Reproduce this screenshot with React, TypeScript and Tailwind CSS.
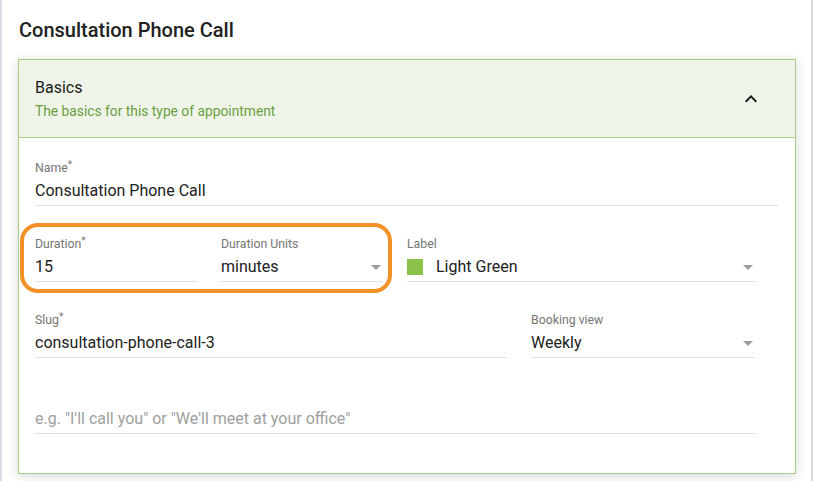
import React from 'react';

const Arrow: React.FC = () => (
    <svg width="10" height="5" viewBox="0 0 10 5" className="shrink-0">
        <path d="M0 0h10L5 5z" fill="#9e9e9e" />
    </svg>
);

interface FieldProps {
    label?: string;
    required?: boolean;
    value: string;
    placeholder?: boolean;
    select?: boolean;
    swatch?: string;
    width: string;
}

const Field: React.FC<FieldProps> = ({ label, required, value, placeholder, select, swatch, width }) => (
    <div className={`flex flex-col ${width}`}>
        <div className="h-4 text-[12.3px] leading-4 text-[#757575]">
            {label}
            {required && <span className="relative -top-[4px] text-[10px]">*</span>}
        </div>
        <div className="mt-[3px] flex h-6 items-center border-b border-[#e0e0e0] pb-[2px] box-content pr-[2px]">
            {swatch && <span className={`mr-[13px] h-4 w-4 shrink-0 ${swatch}`} />}
            <span
                className={`flex-1 text-[16px] leading-6 ${placeholder ? 'text-[#a0a0a0]' : 'text-[#212121]'}`}
            >
                {value}
            </span>
            {select && <Arrow />}
        </div>
    </div>
);

export default function App() {
    return (
        <div
            className="h-[481px] w-[813px] overflow-hidden border-x-2 border-[#d8dce0] bg-white"
            style={{ fontFamily: 'Roboto, "Liberation Sans", sans-serif' }}
        >
            <h1 className="pl-[17px] pt-[16px] text-[20px] font-medium leading-7 text-[#212121]">
                Consultation Phone Call
            </h1>

            <div className="ml-[16px] mt-[15px] w-[778px] border border-[#a8cd84] bg-white shadow-[0_2px_10px_rgba(0,0,0,0.16)]">
                <div className="flex items-center justify-between border-b border-[#a8cd84] bg-[#eef4e7] py-4 pl-4 pr-[32px]">
                    <div>
                        <div className="text-[16px] leading-6 text-[#1a1a1a]">Basics</div>
                        <div className="mt-px text-[13.8px] leading-5 text-[#6c9f45]">
                            The basics for this type of appointment
                        </div>
                    </div>
                    <svg width="24" height="24" viewBox="0 0 24 24" className="mt-[1px]">
                        <path d="M12 8l-6 6 1.41 1.41L12 10.83l4.59 4.58L18 14z" fill="#1a1a1a" />
                    </svg>
                </div>

                <div className="relative flex flex-col gap-[30px] px-4 pb-[39px] pt-[22px]">
                    <Field label="Name" required value="Consultation Phone Call" width="w-[743px]" />

                    <div className="flex gap-6">
                        <Field label="Duration" required value="15" width="w-[162px]" />
                        <Field label="Duration Units" value="minutes" select width="w-[162px]" />
                        <Field label="Label" value="Light Green" select swatch="bg-[#8bc34a]" width="w-[348px]" />
                    </div>

                    <div className="flex gap-6">
                        <Field label="Slug" required value="consultation-phone-call-3" width="w-[472px]" />
                        <Field label="Booking view" value="Weekly" select width="w-[224px]" />
                    </div>

                    <Field
                        value={'e.g. "I\'ll call you" or "We\'ll meet at your office"'}
                        placeholder
                        width="w-[720px]"
                    />

                    {/* highlight annotation */}
                    <div className="pointer-events-none absolute left-[1px] top-[85px] h-[70px] w-[372px] rounded-[18px] border-4 border-[#f39127]" />
                </div>
            </div>
        </div>
    );
}
